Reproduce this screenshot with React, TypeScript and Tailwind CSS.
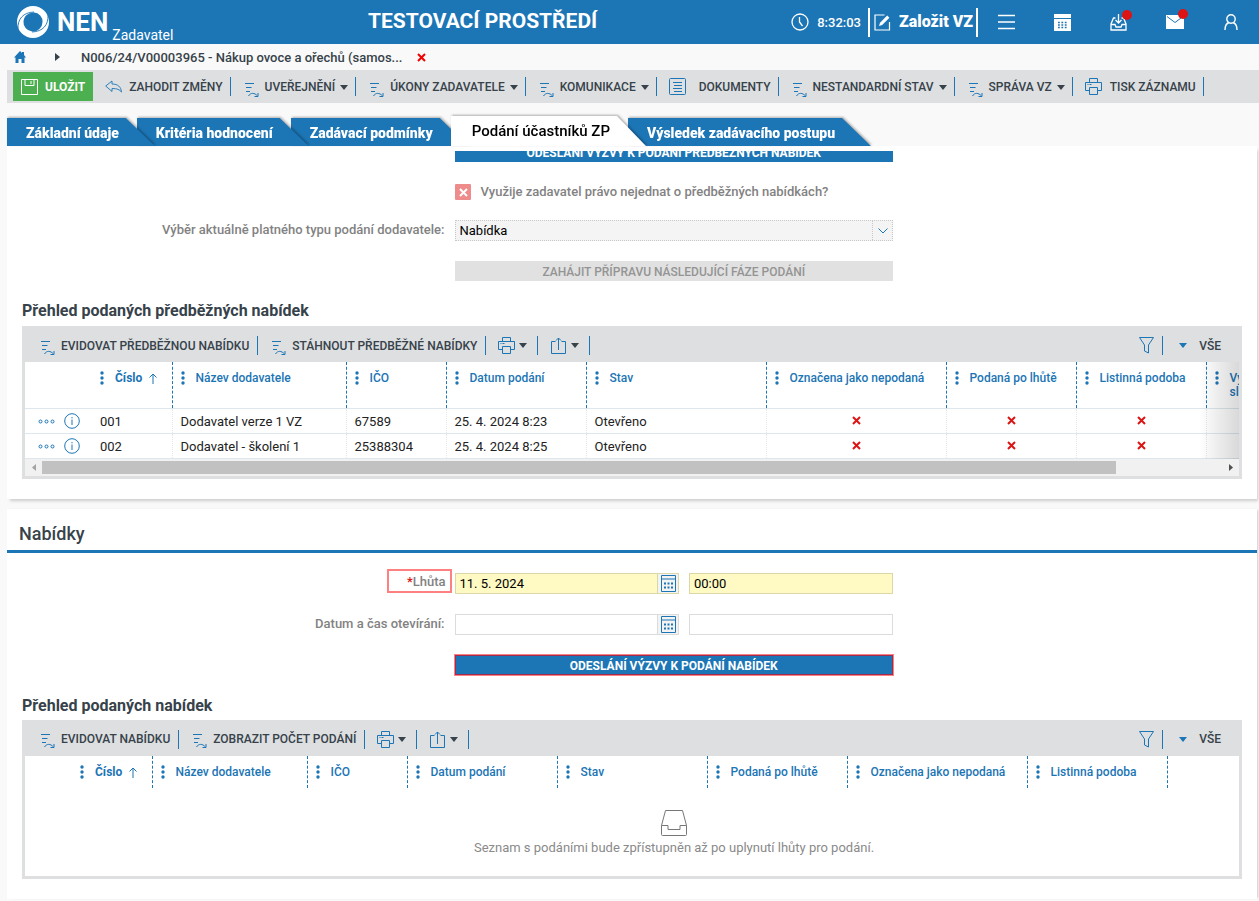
import React from 'react';
import clsx from 'clsx';

type IconProps = { className?: string };

/* ---------- Icons ---------- */

const LogoIcon = () => (
  <svg viewBox="0 0 34 34" className="w-[34px] h-[34px]" aria-hidden="true">
    <path fill="#fff" fillRule="evenodd" d="M17 1a16 16 0 1 1 0 32a16 16 0 1 1 0-32zM18 7.500A10 9.500 0 0 0 7.500 17A9.500 9 0 0 0 16 26.500A10 9.500 0 0 0 26.500 17A9 9 0 0 0 18 7.500z" />
    <path d="M2 24C1.500 14 7 7.500 18 7M32 10C32.500 20 27 26.500 16 27" fill="none" stroke="#1c75b5" strokeWidth="0.9" />
  </svg>
);

const ClockIcon = () => (
  <svg viewBox="0 0 18 18" className="w-[18px] h-[18px]" fill="none" stroke="#fff" strokeWidth="1.3" aria-hidden="true">
    <circle cx="9" cy="9" r="8" />
    <path d="M8.500 4v5l3 4" />
  </svg>
);

const ComposeIcon = () => (
  <svg viewBox="0 0 17 17" className="w-[17px] h-[17px]" fill="none" stroke="#fff" strokeWidth="1.2" aria-hidden="true">
    <path d="M10.500 1H1v15h14.500V8" />
    <path d="M5 12l1-3.200L13.200 1.600l2.200 2.200L8.200 11z" fill="#fff" stroke="none" />
  </svg>
);

const MenuIcon = () => (
  <svg viewBox="0 0 17 16" className="w-[17px] h-4" stroke="#fff" strokeWidth="1.6" aria-hidden="true">
    <path d="M0 1.500h17M0 8h17M0 14.500h17" />
  </svg>
);

const CalendarSolidIcon = () => (
  <svg viewBox="0 0 17 17" className="w-[17px] h-[17px]" aria-hidden="true">
    <path d="M0 0h17v4H0zM0 5h17v12H0z" fill="#fff" />
    <path d="M4 8.500h9M4 11h9M4 13.500h9" stroke="#1c75b5" strokeWidth="1.4" strokeDasharray="1.800 1.600" />
  </svg>
);

const InboxDownIcon = () => (
  <svg viewBox="0 0 17 17" className="w-[17px] h-[17px]" fill="none" stroke="#fff" strokeWidth="1.3" aria-hidden="true">
    <path d="M5.500 4H3.500L1 10v6h15v-6l-2.500-6h-2" />
    <path d="M1 10.500h4l1 2.500h5l1-2.500h4" />
    <path d="M8.500 0v9M5.500 6l3 3 3-3" />
  </svg>
);

const MailIcon = () => (
  <svg viewBox="0 0 18 14" className="w-[18px] h-3.5" aria-hidden="true">
    <path d="M0 0h18v14H0z" fill="#fff" />
    <path d="M1 1.500l8 6 8-6" fill="none" stroke="#1c75b5" strokeWidth="1" />
  </svg>
);

const UserIcon = () => (
  <svg viewBox="0 0 14 16" className="w-3.5 h-4" fill="none" stroke="#fff" strokeWidth="1.4" aria-hidden="true">
    <circle cx="7" cy="5" r="4.200" />
    <path d="M1 16c0-4 2-6.800 4-7.500M13 16c0-4-2-6.800-4-7.500" />
  </svg>
);

const HomeIcon = () => (
  <svg viewBox="0 0 12 12" className="w-3 h-3" fill="#1c75b5" aria-hidden="true">
    <path d="M6 0l2 2V1h2v3l2 2.500H10.500V12H7.500V8h-3v4h-3V6.500H0z" />
  </svg>
);

const SaveIcon = () => (
  <svg viewBox="0 0 17 16" className="w-[17px] h-4" fill="none" stroke="#fff" strokeWidth="1" aria-hidden="true">
    <path d="M.5.5h16v15H.5zM4 .5v6h9v-6M10 2v3" />
  </svg>
);

const UndoIcon = () => (
  <svg viewBox="0 0 17 13" className="w-[17px] h-[13px]" fill="none" stroke="#1c75b5" strokeWidth="0.900" aria-hidden="true">
    <path d="M7 1v3c6 0 9 3 9.500 8C14.500 9.500 12 8.500 7 8.500V11.500L.7 6z" />
  </svg>
);

const ProcessIcon = () => (
  <svg viewBox="0 0 14 14" className="w-3.5 h-3.5 shrink-0" fill="none" stroke="#1c75b5" strokeWidth="1" aria-hidden="true">
    <path d="M0 .5h9M1 4.500h5.500M1 8.500h4" />
    <path d="M3.500 13c2-3.500 6-3.500 9 0M13 10v3.500H9.500" />
  </svg>
);

const DocumentIcon = () => (
  <svg viewBox="0 0 17 17" className="w-[17px] h-[17px]" fill="none" stroke="#1c75b5" strokeWidth="1" aria-hidden="true">
    <rect x=".5" y=".5" width="16" height="16" rx="1" />
    <path d="M4 4.500h9M5 7.500h8M4 10.500h9M5 13.500h8" />
  </svg>
);

const PrinterIcon = () => (
  <svg viewBox="0 0 17 17" className="w-[17px] h-[17px]" fill="none" stroke="#1c75b5" strokeWidth="1" aria-hidden="true">
    <path d="M4.500 4V.5h8V4M4.500 12.500h-4v-8h16v8h-4" />
    <path d="M4.500 9.500h8v7h-8zM2.500 6.500h1M4.500 6.500h2" />
  </svg>
);

const ShareIcon = () => (
  <svg viewBox="0 0 15 17" className="w-[15px] h-[17px]" fill="none" stroke="#1c75b5" strokeWidth="1" aria-hidden="true">
    <path d="M4.500 4.500h-4v12h14v-12h-4M7.500 13V1M5 3.500L7.500 1 10 3.500" />
  </svg>
);

const FilterIcon = () => (
  <svg viewBox="0 0 15 17" className="w-[15px] h-[17px]" fill="none" stroke="#1c75b5" strokeWidth="1" aria-hidden="true">
    <path d="M.5.5h14L9.500 8v8L5.500 14V8z" />
  </svg>
);

const Caret = ({ className }: IconProps) => (
  <svg viewBox="0 0 8 5" className={clsx('w-2 h-[5px] shrink-0', className)} fill="currentColor" aria-hidden="true">
    <path d="M0 0h8L4 5z" />
  </svg>
);

const CrossIcon = ({ className }: IconProps) => (
  <svg viewBox="0 0 9 9" className={clsx('w-[9px] h-[9px]', className)} fill="none" stroke="currentColor" strokeWidth="2" aria-hidden="true">
    <path d="M1 1l7 7M8 1L1 8" />
  </svg>
);

const CalendarIcon = () => (
  <svg viewBox="0 0 15 17" className="w-[15px] h-[17px]" fill="none" stroke="#1c75b5" aria-hidden="true">
    <path d="M.5.5h14v16H.5zM.5 4h14" />
    <path d="M3 8.500h9M3 12.500h9" strokeWidth="2" strokeDasharray="2 1.500" />
  </svg>
);

const ColumnDots = () => (
  <svg viewBox="0 0 4 14" className="w-1 h-3.5 shrink-0" fill="#1c75b5" aria-hidden="true">
    <circle cx="2" cy="2" r="1.700" />
    <circle cx="2" cy="7" r="1.700" />
    <circle cx="2" cy="12" r="1.700" />
  </svg>
);

const SortUpIcon = () => (
  <svg viewBox="0 0 8 11" className="w-2 h-[11px]" fill="none" stroke="#1c75b5" strokeWidth="1" aria-hidden="true">
    <path d="M4 11V1M.5 4.500L4 1l3.500 3.500" />
  </svg>
);

const RowMenuIcon = () => (
  <svg viewBox="0 0 17 5" className="w-[17px] h-[5px]" fill="none" stroke="#1c75b5" strokeWidth="1" aria-hidden="true">
    <circle cx="2.500" cy="2.500" r="1.500" />
    <circle cx="8.500" cy="2.500" r="1.500" />
    <circle cx="14.500" cy="2.500" r="1.500" />
  </svg>
);

const InfoIcon = () => (
  <svg viewBox="0 0 16 16" className="w-4 h-4" fill="none" stroke="#1c75b5" strokeWidth="1" aria-hidden="true">
    <circle cx="8" cy="8" r="7.300" />
    <path d="M8 6.500V12M8 4v1.300" />
  </svg>
);

const EmptyTrayIcon = () => (
  <svg viewBox="0 0 26 26" className="w-[26px] h-[26px]" fill="none" stroke="#777" strokeWidth="1" aria-hidden="true">
    <path d="M4.500.5h17l4 15v9a1 1 0 0 1-1 1h-23a1 1 0 0 1-1-1v-9z" />
    <path d="M.5 15.500h6.500v4h12v-4h6.500" />
  </svg>
);

/* ---------- Data ---------- */

const toolbarItems = [
  { label: 'UVEŘEJNĚNÍ', menu: true },
  { label: 'ÚKONY ZADAVATELE', menu: true },
  { label: 'KOMUNIKACE', menu: true },
  { label: 'DOKUMENTY', menu: false },
  { label: 'NESTANDARDNÍ STAV', menu: true },
  { label: 'SPRÁVA VZ', menu: true },
];

const tabs = ['Základní údaje', 'Kritéria hodnocení', 'Zadávací podmínky', 'Podání účastníků ZP', 'Výsledek zadávacího postupu'];
const tabLayers = ['z-[5]', 'z-[4]', 'z-[3]', 'z-[6]', 'z-[1]'];

const preliminaryColumns = [
  { label: 'Číslo', width: 'w-[80px]' },
  { label: 'Název dodavatele', width: 'w-[174px]' },
  { label: 'IČO', width: 'w-[100px]' },
  { label: 'Datum podání', width: 'w-[140px]' },
  { label: 'Stav', width: 'w-[180px]' },
  { label: 'Označena jako nepodaná', width: 'w-[180px]' },
  { label: 'Podaná po lhůtě', width: 'w-[130px]' },
  { label: 'Listinná podoba', width: 'w-[130px]' },
  { label: 'Vyloučení služeb', width: 'w-[91px]' },
];

const preliminaryRows = [
  { number: '001', supplier: 'Dodavatel verze 1 VZ', ico: '67589', date: '25. 4. 2024 8:23', state: 'Otevřeno' },
  { number: '002', supplier: 'Dodavatel - školení 1', ico: '25388304', date: '25. 4. 2024 8:25', state: 'Otevřeno' },
];

const offerColumns = [
  { label: 'Číslo', width: 'w-[80px]' },
  { label: 'Název dodavatele', width: 'w-[155px]' },
  { label: 'IČO', width: 'w-[100px]' },
  { label: 'Datum podání', width: 'w-[150px]' },
  { label: 'Stav', width: 'w-[150px]' },
  { label: 'Podaná po lhůtě', width: 'w-[140px]' },
  { label: 'Označena jako nepodaná', width: 'w-[180px]' },
  { label: 'Listinná podoba', width: 'w-[140px]' },
];

/* ---------- Shared parts ---------- */

const Separator = () => <span className="w-px h-[19px] bg-[#1c75b5] shrink-0" />;

const ColumnHead = ({ label, width }: { label: string; width: string }) => {
  const isSorted = label === 'Číslo';
  return (
    <th
      scope="col"
      className={clsx(
        width,
        'p-0 align-top text-left text-xs leading-[14px] text-[#1c75b5] border-r border-dashed border-r-[#1c75b5]',
        isSorted ? 'font-bold' : 'font-medium',
      )}
    >
      <div className="flex items-start gap-[11px] pl-2 pt-[9px]">
        <ColumnDots />
        <span>{label}</span>
        {isSorted && <span className="-ml-1 pt-0.5"><SortUpIcon /></span>}
      </div>
    </th>
  );
};

interface GridToolbarProps {
  actions: string[];
}

const GridToolbar: React.FC<GridToolbarProps> = ({ actions }) => (
  <div className="flex items-center justify-between h-9 pt-[3px] pl-4 pr-[18px]">
    <div className="flex items-center">
      {actions.map((action, index) => (
        <React.Fragment key={action}>
          <button type="button" className={clsx('flex items-center gap-[6px] pr-2', index > 0 && 'pl-[14px]')}>
            <span className="pt-1"><ProcessIcon /></span>
            {action}
          </button>
          <Separator />
        </React.Fragment>
      ))}
      <button type="button" aria-label="Tisk" className="flex items-center gap-1 pl-3 pr-[10px]">
        <PrinterIcon />
        <Caret />
      </button>
      <Separator />
      <button type="button" aria-label="Export" className="flex items-center gap-[5px] pl-[13px] pr-[10px]">
        <ShareIcon />
        <Caret />
      </button>
      <Separator />
    </div>
    <div className="flex items-center">
      <button type="button" aria-label="Filtr" className="pr-2"><FilterIcon /></button>
      <Separator />
      <button type="button" className="flex items-center gap-3 pl-4">
        <Caret className="text-[#1c75b5]" />
        VŠE
      </button>
    </div>
  </div>
);

const DateTimeFields = ({ id, date, time, required }: { id: string; date: string; time: string; required?: boolean }) => {
  const box = required ? 'bg-[#fff9c4] border-[#dcd7a8]' : 'bg-white border-[#dcdcdc]';
  return (
    <div className="flex gap-[10px]">
      <div className="flex flex-1 basis-[21px]">
        <input id={id} type="text" defaultValue={date} className={clsx('flex-1 min-w-0 h-[21px] border px-1 text-[13px] text-black', box)} />
        <button type="button" aria-label="Vybrat datum" className={clsx('flex items-center justify-center w-[21px] h-[21px] border border-l-0 bg-[#f3f3f3]', required ? 'border-[#dcd7a8]' : 'border-[#dcdcdc]')}>
          <CalendarIcon />
        </button>
      </div>
      <input type="text" aria-label="Čas" defaultValue={time} className={clsx('w-[204px] h-[21px] border px-1 text-[13px] text-black', box)} />
    </div>
  );
};

/* ---------- Page sections ---------- */

const TopBar = () => (
  <header className="flex items-center justify-between h-11 bg-[#1c75b5] text-white pl-4 pr-[21px]">
    <a href="#" className="flex items-center w-[260px]">
      <LogoIcon />
      <span className="pl-[7px] text-[26px] leading-[44px] font-bold">NEN</span>
      <span className="pl-1 pt-[26px] text-sm leading-[18px]">Zadavatel</span>
    </a>
    <div className="flex-1 pl-[92px] text-[21px] font-bold">TESTOVACÍ PROSTŘEDÍ</div>
    <div className="flex items-center">
      <ClockIcon />
      <time className="pl-2 pr-[7px] pt-px text-[13px] font-medium">8:32:03</time>
      <button type="button" className="flex items-center gap-2 h-[29px] pl-1 pr-[3px] border-x-2 border-white text-base font-black">
        <ComposeIcon />
        Založit VZ
      </button>
      <nav className="flex items-center pl-5">
        <button type="button" aria-label="Menu" className="pr-[39px]"><MenuIcon /></button>
        <button type="button" aria-label="Kalendář" className="pr-[39px]"><CalendarSolidIcon /></button>
        <button type="button" aria-label="Úkoly" className="relative mr-[39px]">
          <InboxDownIcon />
          <span className="absolute -top-1 left-3 w-[10px] h-[10px] rounded-full bg-[#dd1414]" />
        </button>
        <button type="button" aria-label="Zprávy" className="relative mr-10">
          <MailIcon />
          <span className="absolute -top-1.5 left-3 w-[10px] h-[10px] rounded-full bg-[#dd1414]" />
        </button>
        <button type="button" aria-label="Profil"><UserIcon /></button>
      </nav>
    </div>
  </header>
);

const Breadcrumb = () => (
  <nav className="flex items-center h-[26px] pl-[14px] text-[13px] font-medium text-[#37424a]">
    <a href="#" aria-label="Domů"><HomeIcon /></a>
    <svg viewBox="0 0 5 8" className="w-[5px] h-2 ml-[29px] mr-[21px]" fill="#37424a" aria-hidden="true">
      <path d="M0 0l5 4-5 4z" />
    </svg>
    <a href="#" className="pt-px">N006/24/V00003965 - Nákup ovoce a ořechů (samos...</a>
    <button type="button" aria-label="Zavřít" className="ml-[15px] text-[#f00000]"><CrossIcon /></button>
  </nav>
);

const MainToolbar = () => (
  <div className="flex items-center h-[33px] ml-[7px] pl-[6px] bg-[#dddfe1] text-xs font-medium text-[#37424a]">
    <button type="button" className="flex items-center gap-[7px] h-[29px] px-2 bg-[#4caf50] text-white font-bold">
      <SaveIcon />
      ULOŽIT
    </button>
    <button type="button" className="flex items-center gap-[7px] pl-3 pr-[7px]">
      <UndoIcon />
      ZAHODIT ZMĚNY
    </button>
    <Separator />
    {toolbarItems.map((item) => (
      <React.Fragment key={item.label}>
        <button type="button" className={clsx('flex items-center pr-[7px]', item.menu ? 'gap-[6px] pl-[14px]' : 'gap-[13px] pl-3')}>
          {item.menu ? <span className="pt-1.5"><ProcessIcon /></span> : <DocumentIcon />}
          <span className="flex items-center gap-[5px]">
            {item.label}
            {item.menu && <Caret className="mt-0.5" />}
          </span>
        </button>
        <Separator />
      </React.Fragment>
    ))}
    <button type="button" className="flex items-center gap-2 pl-3 pr-[7px]">
      <PrinterIcon />
      TISK ZÁZNAMU
    </button>
    <Separator />
  </div>
);

const TabBar = () => (
  <div role="tablist" className="flex items-end h-[30px] mt-[13px] ml-[7px]">
    {tabs.map((tab, index) => {
      const isActive = index === 3;
      return (
        <div key={tab} className={clsx('relative drop-shadow-[1px_-1px_1px_rgba(0,0,0,0.3)]', index > 0 && '-ml-[18px]', tabLayers[index])}>
          <button
            type="button"
            role="tab"
            aria-selected={isActive}
            className={clsx(
              'block pr-9 [clip-path:polygon(0_0,calc(100%-29px)_0,100%_100%,0_100%)]',
              isActive ? 'h-[30px] pl-[21px] bg-white text-black text-[15px] font-medium' : 'h-7 pt-0.5 pl-[19px] bg-[#1c75b5] text-white text-sm leading-5 font-black',
            )}
          >
            {tab}
          </button>
        </div>
      );
    })}
  </div>
);

const PreliminaryOffers = () => (
  <section className="bg-white mr-[2px] pt-[5px] pb-5 shadow-[2px_3px_3px_-1px_rgba(0,0,0,0.18)]">
    <div className="grid grid-cols-[35%_calc(35%+1px)] gap-x-[10px] text-[13px] text-[#828282]">
      <div className="col-start-2 flex items-end h-[11px] overflow-hidden">
        <button type="button" className="w-full h-[21px] shrink-0 pt-0.5 bg-[#1c75b5] text-white text-xs leading-[21px] font-bold">
          ODESLÁNÍ VÝZVY K PODÁNÍ PŘEDBĚŽNÝCH NABÍDEK
        </button>
      </div>
      <label className="col-start-2 flex items-center gap-[10px] mt-[21px] h-[18px] font-medium">
        <span className="relative w-4 h-4">
          <input type="checkbox" disabled className="block appearance-none w-4 h-4 rounded-[1px] bg-[#ee8c8c]" />
          <CrossIcon className="absolute top-1 left-1 w-2 h-2 text-white pointer-events-none" />
        </span>
        Využije zadavatel právo nejednat o předběžných nabídkách?
      </label>
      <label htmlFor="offer-type" className="mt-[19px] h-[21px] leading-[19px] text-right font-medium">
        Výběr aktuálně platného typu podání dodavatele:
      </label>
      <div className="relative mt-[19px]">
        <select id="offer-type" className="block appearance-none w-full h-[21px] px-1 border border-dotted border-[#c8c8c8] bg-[#f4f4f4] text-[13px] text-black">
          <option>Nabídka</option>
        </select>
        <span className="absolute top-px bottom-px right-px w-5 flex items-center justify-center border-l border-dotted border-[#c8c8c8] pointer-events-none">
          <svg viewBox="0 0 10 6" className="w-[10px] h-1.5" fill="none" stroke="#1c75b5" strokeWidth="1" aria-hidden="true">
            <path d="M.5.5L5 5 9.500.5" />
          </svg>
        </span>
      </div>
      <button type="button" disabled className="col-start-2 mt-5 h-5 pt-0.5 bg-[#e1e1e1] text-xs font-medium text-[#949494]">
        ZAHÁJIT PŘÍPRAVU NÁSLEDUJÍCÍ FÁZE PODÁNÍ
      </button>
    </div>

    <h3 className="mt-5 mb-[5px] pl-[15px] text-base leading-5 font-bold text-[#37424a]">Přehled podaných předběžných nabídek</h3>

    <div className="mx-[15px] p-[3px] pt-0 bg-[#dddfe1] text-xs font-medium text-[#37424a]">
      <GridToolbar actions={['EVIDOVAT PŘEDBĚŽNOU NABÍDKU', 'STÁHNOUT PŘEDBĚŽNÉ NABÍDKY']} />
      <div className="relative overflow-hidden bg-white">
        <table className="table-fixed w-[1272px] border-collapse">
          <thead>
            <tr className="h-[46px]">
              <td className="w-[67px] p-0" />
              {preliminaryColumns.map((column) => (
                <ColumnHead key={column.label} label={column.label} width={column.width} />
              ))}
            </tr>
          </thead>
          <tbody className="text-[13px] font-normal text-[#222]">
            {preliminaryRows.map((row) => (
              <tr key={row.number} className="h-[25px] border-y border-[#dde7ed]">
                <td className="p-0 pl-[13px]">
                  <span className="flex items-center gap-[9px] pt-px">
                    <button type="button" aria-label="Akce"><RowMenuIcon /></button>
                    <button type="button" aria-label="Detail"><InfoIcon /></button>
                  </span>
                </td>
                {[row.number, row.supplier, row.ico, row.date, row.state].map((value) => (
                  <td key={value} className="p-0 pt-0.5 pl-2 border-r border-r-[#e4e8ea] [border-right-style:dotted]">{value}</td>
                ))}
                {['submitted', 'late', 'paper'].map((key) => (
                  <td key={key} className="p-0 text-[#dd1414] border-r border-r-[#e4e8ea] [border-right-style:dotted]">
                    <CrossIcon className="mx-auto" />
                  </td>
                ))}
                <td className="p-0" />
              </tr>
            ))}
          </tbody>
        </table>
        <div className="absolute inset-y-0 right-0 w-10 bg-gradient-to-l from-black/15 to-transparent pointer-events-none" />
      </div>
      <div className="flex items-center h-[17px] bg-[#f1f1f1]">
        <button type="button" aria-label="Posunout vlevo" className="flex justify-center w-[17px]">
          <svg viewBox="0 0 4 7" className="w-1 h-[7px]" fill="#a3a3a3" aria-hidden="true"><path d="M4 0v7L0 3.500z" /></svg>
        </button>
        <div className="flex-1">
          <div className="w-[91%] h-[13px] bg-[#c1c1c1]" />
        </div>
        <button type="button" aria-label="Posunout vpravo" className="flex justify-center w-[17px]">
          <svg viewBox="0 0 4 7" className="w-1 h-[7px]" fill="#505050" aria-hidden="true"><path d="M0 0v7l4-3.500z" /></svg>
        </button>
      </div>
    </div>
  </section>
);

const Offers = () => (
  <section className="bg-white mr-[2px] mt-[10px] pb-5 shadow-[2px_0_2px_-1px_rgba(0,0,0,0.18)]">
    <h2 className="h-11 pl-3 border-b-[3px] border-[#1c75b5] pt-3 text-lg leading-[26px] font-medium text-[#37424a]">Nabídky</h2>

    <div className="grid grid-cols-[35%_calc(35%+1px)] gap-x-[10px] pt-4 text-[13px] text-[#828282]">
      <div className="flex justify-end -mr-[7px]">
        <label htmlFor="deadline" className="w-[65px] h-6 pr-1 border-2 border-[#ff8080] leading-[21px] text-right font-medium">
          <span className="text-[#dd1414]">*</span>Lhůta
        </label>
      </div>
      <div className="pt-1">
        <DateTimeFields id="deadline" date="11. 5. 2024" time="00:00" required />
      </div>
      <label htmlFor="opening" className="mt-5 leading-[19px] text-right font-medium">Datum a čas otevírání:</label>
      <div className="mt-5">
        <DateTimeFields id="opening" date="" time="" />
      </div>
      <button type="button" className="col-start-2 mt-5 mb-px h-5 pt-px border border-[#a02c50] outline outline-1 outline-[#ff8080] bg-[#1c75b5] text-white text-xs leading-[18px] font-bold">
        ODESLÁNÍ VÝZVY K PODÁNÍ NABÍDEK
      </button>
    </div>

    <h3 className="mt-5 mb-1 pl-[15px] text-base leading-5 font-bold text-[#37424a]">Přehled podaných nabídek</h3>

    <div className="mx-[15px] p-[3px] pt-0 bg-[#dddfe1] text-xs font-medium text-[#37424a]">
      <GridToolbar actions={['EVIDOVAT NABÍDKU', 'ZOBRAZIT POČET PODÁNÍ']} />
      <div className="overflow-hidden bg-white">
        <table className="table-fixed w-[1142px] border-collapse">
          <thead>
            <tr className="h-8">
              <td className="w-[47px] p-0" />
              {offerColumns.map((column) => (
                <ColumnHead key={column.label} label={column.label} width={column.width} />
              ))}
            </tr>
          </thead>
        </table>
        <div className="flex flex-col items-center gap-[2px] pt-[22px] pb-[18px] pl-[84px] text-[13px] leading-5 font-normal text-[#8a8a8a]">
          <EmptyTrayIcon />
          <p>Seznam s podáními bude zpřístupněn až po uplynutí lhůty pro podání.</p>
        </div>
      </div>
    </div>
  </section>
);

const App: React.FC = () => {
  return (
    <div className="min-h-screen bg-[#f9f9f9] font-['Roboto',sans-serif] text-[#37424a]">
      <TopBar />
      <Breadcrumb />
      <MainToolbar />
      <TabBar />
      <main className="pl-[7px]">
        <PreliminaryOffers />
        <Offers />
      </main>
    </div>
  );
};

export default App;
